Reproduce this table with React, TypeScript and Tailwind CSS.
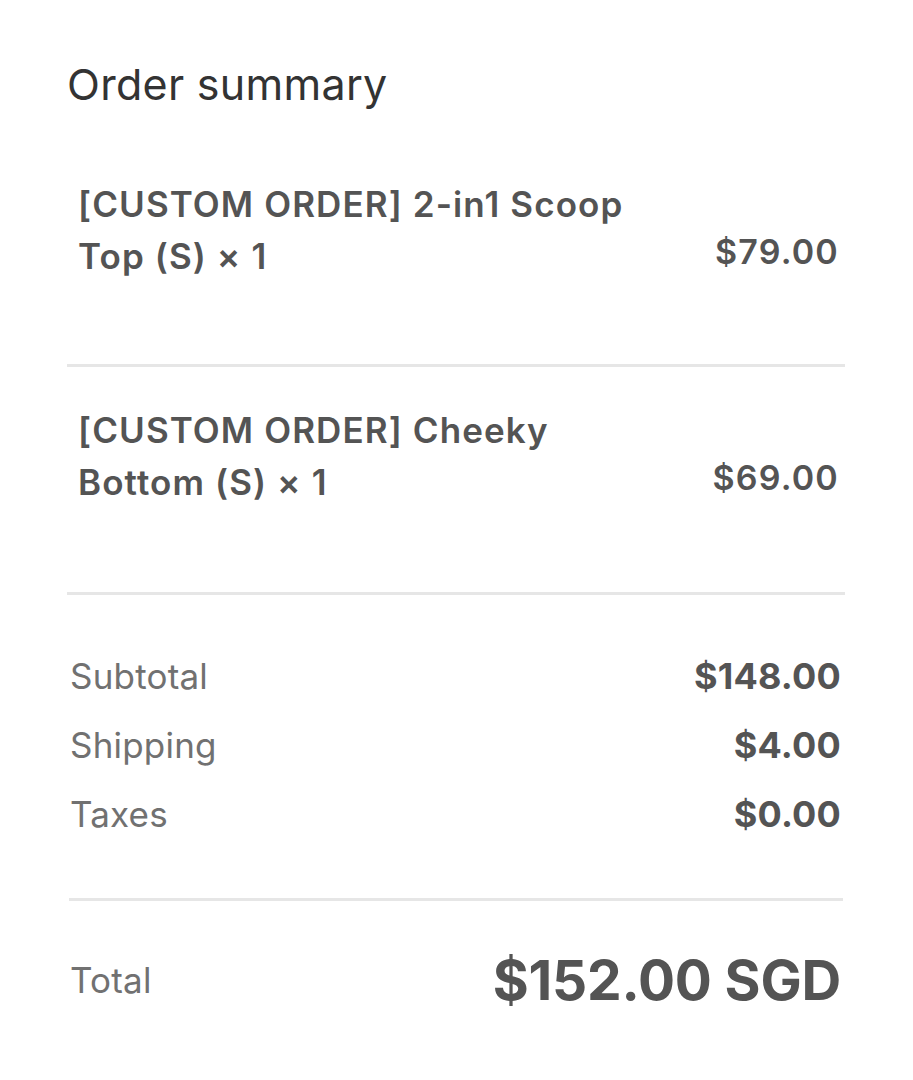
import React from 'react';

const items = [
  { name: '[CUSTOM ORDER] 2-in1 Scoop Top (S) × 1', price: '$79.00' },
  { name: '[CUSTOM ORDER] Cheeky Bottom (S) × 1', price: '$69.00' },
];

const rows = [
  { label: 'Subtotal', value: '$148.00' },
  { label: 'Shipping', value: '$4.00' },
  { label: 'Taxes', value: '$0.00' },
];

export default function App() {
  return (
    <div className="min-h-screen w-[913px] bg-white font-['Inter','Liberation_Sans',sans-serif]">
      <div className="pl-[67px] pr-[68px] pt-[56px]">
        <h1 className="text-[43px] leading-[56px] font-normal text-[#333] tracking-[0.3px]">Order summary</h1>

        <div className="mt-[66px]">
          {items.map((item, i) => (
            <div key={i}>
              {i > 0 && <div className="h-[3px] bg-[#e6e6e6]" />}
              <div className={i > 0 ? 'pt-[37px] pb-[84px]' : 'pb-[82px]'}>
                <div className="flex items-end justify-between pl-[11px] pr-[6px]">
                  <p className="w-[575px] text-[35px] leading-[52px] font-semibold text-[#545454] tracking-[1.1px]">{item.name}</p>
                  <span className="text-[34px] leading-[52px] font-semibold text-[#545454] tracking-[1.2px] mb-[4px]">{item.price}</span>
                </div>
              </div>
            </div>
          ))}
          <div className="h-[3px] bg-[#e6e6e6]" />
        </div>

        <div className="pt-[62px] pb-[65px] pl-[3px] pr-[4px] flex flex-col gap-[31px]">
          {rows.map(r => (
            <div key={r.label} className="flex items-center justify-between">
              <span className="text-[35px] leading-[38px] text-[#717171] tracking-[0.2px]">{r.label}</span>
              <span className="text-[36px] leading-[38px] font-bold text-[#545454] tracking-[0.2px]">{r.value}</span>
            </div>
          ))}
        </div>

        <div className="h-[3px] bg-[#e6e6e6] mx-[2px]" />

        <div className="flex items-center justify-between pl-[3px] pr-[4px] pt-[47px]">
          <span className="text-[35px] leading-[64px] text-[#717171] tracking-[0.2px]">Total</span>
          <span className="text-[55px] leading-[64px] font-bold text-[#545454] tracking-[-0.2px]">$152.00 SGD</span>
        </div>
      </div>
    </div>
  );
}
